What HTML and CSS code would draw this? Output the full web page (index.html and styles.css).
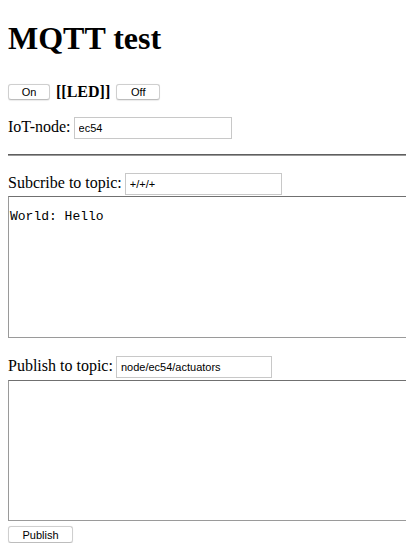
FILE: index.html
```html
<!DOCTYPE html>
<html>
<head>
<meta charset="utf-8">
<title>MQTT test</title>
<link rel="stylesheet" href="styles.css">
</head>
<body>
<div class="page">
  <h1 class="title">MQTT test</h1>
  <div class="controls">
    <button class="btn">On</button>
    <b class="led">[[LED]]</b>
    <button class="btn">Off</button>
  </div>
  <div class="field field-node">
    <label class="label">IoT-node:</label>
    <input class="text-input" type="text" value="ec54">
  </div>
  <hr class="rule">
  <div class="field field-sub">
    <label class="label">Subcribe to topic:</label>
    <input class="text-input" type="text" value="+/+/+">
  </div>
  <textarea class="log log-sub">World: Hello</textarea>
  <div class="field field-pub">
    <label class="label">Publish to topic:</label>
    <input class="text-input" type="text" value="node/ec54/actuators">
  </div>
  <textarea class="log log-pub"></textarea>
  <button class="btn btn-publish">Publish</button>
</div>
</body>
</html>
```
FILE: styles.css
```css
html, body {
  margin: 0;
  padding: 0;
  overflow: hidden;
  background: #fff;
}
body {
  font-family: "Liberation Serif", "Times New Roman", serif;
  font-size: 16px;
  color: #000;
}
.page {
  padding-left: 8px;
}
.title {
  margin: 20px 0 0;
  font-size: 32px;
  line-height: 37px;
  font-weight: bold;
}
.controls {
  margin-top: 27px;
  height: 16px;
  display: flex;
  align-items: center;
  gap: 6px;
}
.led {
  font-size: 16px;
  line-height: 16px;
}
.btn {
  box-sizing: border-box;
  height: 16px;
  padding: 0 13px;
  margin: 0;
  border: 1px solid #cfcfcf;
  border-bottom-color: #bdbdbd;
  border-radius: 3px;
  background: #fff;
  font-family: "Liberation Sans", Arial, sans-serif;
  font-size: 11px;
  line-height: 14px;
  color: #000;
  box-shadow: 0 0.5px 1px rgba(0,0,0,0.08);
}
.controls .btn:first-child {
  width: 42px;
  padding: 0;
}
.controls .btn:last-child {
  width: 44px;
  padding: 0;
}
.field {
  display: flex;
  align-items: baseline;
  gap: 3px;
}
.field-node {
  margin-top: 17px;
}
.field-sub {
  margin-top: 17px;
}
.field-pub {
  margin-top: 18px;
}
.label {
  line-height: 18px;
}
.text-input {
  box-sizing: border-box;
  width: 158px;
  height: 22px;
  margin: 0;
  padding: 0 4px;
  border: 1px solid #c8c8c8;
  font-family: "Liberation Sans", Arial, sans-serif;
  font-size: 11px;
  color: #000;
  background: #fff;
}
.field-sub .text-input {
  width: 157px;
}
.field-pub .text-input {
  width: 156px;
}
.rule {
  margin: 15px 0 0;
  height: 0;
  border: 0;
  border-top: 1px solid #5f5f5f;
  border-bottom: 1px solid #9a9a9a;
}
.log {
  display: block;
  box-sizing: border-box;
  width: calc(100% + 4px);
  margin: 1px 0 0;
  padding: 12px 0 0 1px;
  border: 1px solid #9a9a9a;
  border-top-color: #707070;
  font-family: "Liberation Mono", "Courier New", monospace;
  font-size: 13px;
  line-height: 15px;
  color: #000;
  resize: none;
  background: #fff;
}
.log-sub {
  height: 142px;
}
.log-pub {
  margin-top: 2px;
  height: 141px;
}
.btn-publish {
  display: block;
  margin-top: 5px;
  height: 17px;
  width: 65px;
  padding: 0;
}
```
